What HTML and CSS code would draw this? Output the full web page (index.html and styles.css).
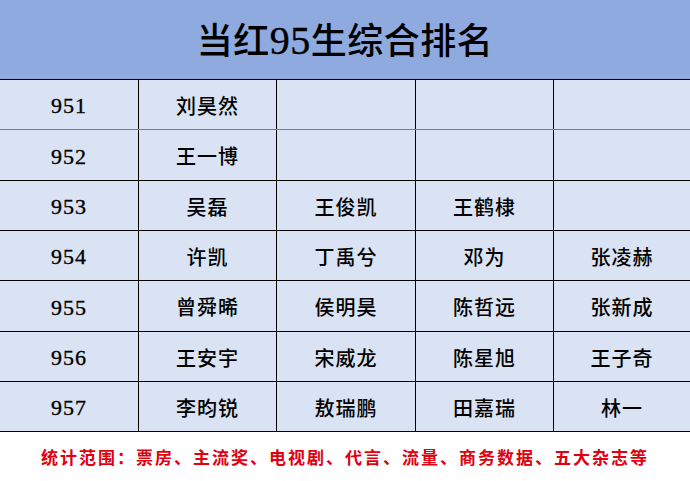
FILE: index.html
```html
<!DOCTYPE html>
<html lang="zh-CN">
<head>
<meta charset="utf-8">
<link rel="stylesheet" href="styles.css">
</head>
<body>
<div class="page">
  <header class="title-bar"><h1 class="title">当红<span class="title-num">95</span>生综合排名</h1></header>
  <div class="grid">
    <div class="row first"><div class="cell num">951</div><div class="cell">刘昊然</div><div class="cell"></div><div class="cell"></div><div class="cell"></div></div>
    <div class="row tall"><div class="cell num">952</div><div class="cell">王一博</div><div class="cell"></div><div class="cell"></div><div class="cell"></div></div>
    <div class="row"><div class="cell num">953</div><div class="cell">吴磊</div><div class="cell">王俊凯</div><div class="cell">王鹤棣</div><div class="cell"></div></div>
    <div class="row"><div class="cell num">954</div><div class="cell">许凯</div><div class="cell">丁禹兮</div><div class="cell">邓为</div><div class="cell">张凌赫</div></div>
    <div class="row tall"><div class="cell num">955</div><div class="cell">曾舜晞</div><div class="cell">侯明昊</div><div class="cell">陈哲远</div><div class="cell">张新成</div></div>
    <div class="row"><div class="cell num">956</div><div class="cell">王安宇</div><div class="cell">宋威龙</div><div class="cell">陈星旭</div><div class="cell">王子奇</div></div>
    <div class="row"><div class="cell num">957</div><div class="cell">李昀锐</div><div class="cell">敖瑞鹏</div><div class="cell">田嘉瑞</div><div class="cell">林一</div></div>
  </div>
  <footer class="note">统计范围：票房、主流奖、电视剧、代言、流量、商务数据、五大杂志等</footer>
</div>
</body>
</html>
```
FILE: styles.css
```css
* { box-sizing: border-box; }
html, body { margin: 0; padding: 0; background: #ffffff; }
.page {
  width: 690px;
  height: 481px;
  font-family: "Liberation Serif", "Noto Sans CJK SC", serif;
  color: #000;
  overflow: hidden;
}
.title-bar {
  height: 79px;
  background: #8eaadf;
  display: flex;
  align-items: center;
  justify-content: center;
}
.title {
  margin: 0;
  padding-top: 2px;
  font-size: 36px;
  font-weight: 500;
  letter-spacing: 0.5px;
  line-height: 1;
}
.title-num {
  font-size: 40px;
  -webkit-text-stroke: 0.4px #000;
}
.grid {
  border-top: 1px solid #000;
  background: #dae3f3;
}
.row {
  display: grid;
  grid-template-columns: 138px 138px 139px 138px 137px;
  height: 50px;
  border-bottom: 1px solid #000;
}
.row.first { border-bottom-color: #7a7a8a; }
.row.tall { height: 51px; }
.cell {
  display: flex;
  align-items: center;
  justify-content: center;
  border-left: 1px solid #000;
  font-size: 20px;
  font-weight: 500;
  letter-spacing: 1px;
  padding-top: 1px;
}
.cell.num {
  border-left: none;
  font-size: 22px;
  letter-spacing: 1px;
  padding-top: 3px;
  -webkit-text-stroke: 0.35px #000;
}
.note {
  height: 50px;
  display: flex;
  align-items: center;
  justify-content: center;
  color: #e00010;
  font-size: 17px;
  font-weight: 700;
  letter-spacing: 2px;
  padding-bottom: 2px;
}
```
